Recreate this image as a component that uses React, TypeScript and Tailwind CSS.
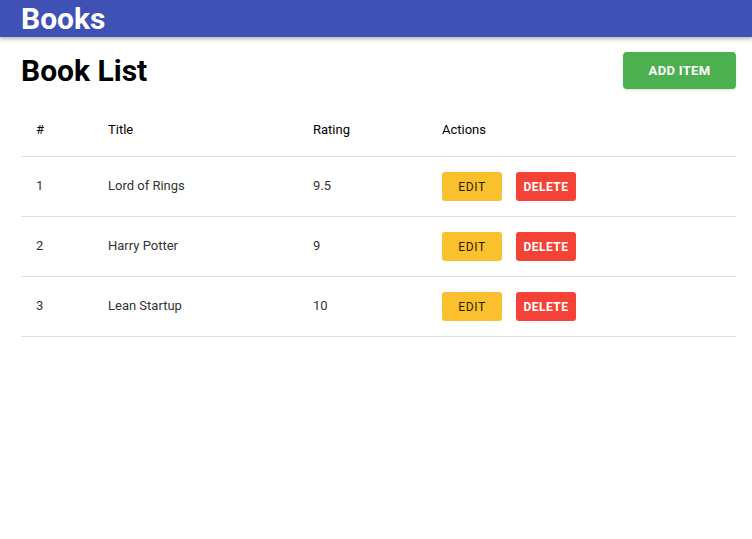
const BOOKS = [
  { id: 1, title: 'Lord of Rings', rating: '9.5' },
  { id: 2, title: 'Harry Potter', rating: '9' },
  { id: 3, title: 'Lean Startup', rating: '10' },
]

export default function App() {
  return (
    <div className="min-h-screen bg-white font-['Roboto',sans-serif] text-black">
      {/* App bar */}
      <header className="h-[37px] bg-[#3f51b5] px-[21px] shadow-[0_2px_4px_rgba(0,0,0,0.3)]">
        <h1 className="text-[30px] font-bold leading-[37px] text-white">Books</h1>
      </header>

      <main className="px-[16px] pl-[21px] pt-[15px]">
        {/* Title row */}
        <div className="flex h-[37px] items-center justify-between">
          <h2 className="text-[30px] font-bold leading-none">Book List</h2>
          <button className="h-[37px] w-[113px] rounded bg-[#4caf50] text-[13px] font-bold tracking-wide text-white shadow-sm">
            ADD ITEM
          </button>
        </div>

        {/* Table */}
        <table className="mt-[14px] w-full border-collapse text-[13px]">
          <thead>
            <tr className="h-[53px] border-b border-[#e0e0e0] text-left">
              <th className="w-[72px] pl-[15px] font-normal text-black">#</th>
              <th className="w-[205px] pl-[15px] font-normal text-black">Title</th>
              <th className="w-[129px] pl-[15px] font-normal text-black">Rating</th>
              <th className="pl-[15px] font-normal text-black">Actions</th>
            </tr>
          </thead>
          <tbody>
            {BOOKS.map((b) => (
              <tr key={b.id} className="h-[60px] border-b border-[#e0e0e0] text-[#333]">
                <td className="pl-[15px]">{b.id}</td>
                <td className="pl-[15px]">{b.title}</td>
                <td className="pl-[15px]">{b.rating}</td>
                <td className="pl-[15px]">
                  <div className="flex gap-[14px] pt-px">
                    <button className="h-[29px] w-[60px] rounded-[3px] bg-[#fbc02d] pt-px text-[12px] font-normal tracking-[0.05em] text-[#2a1f00]">
                      EDIT
                    </button>
                    <button className="h-[29px] w-[60px] rounded-[3px] bg-[#f44336] pt-px text-[12px] font-bold tracking-[0.04em] text-white">
                      DELETE
                    </button>
                  </div>
                </td>
              </tr>
            ))}
          </tbody>
        </table>
      </main>
    </div>
  )
}
